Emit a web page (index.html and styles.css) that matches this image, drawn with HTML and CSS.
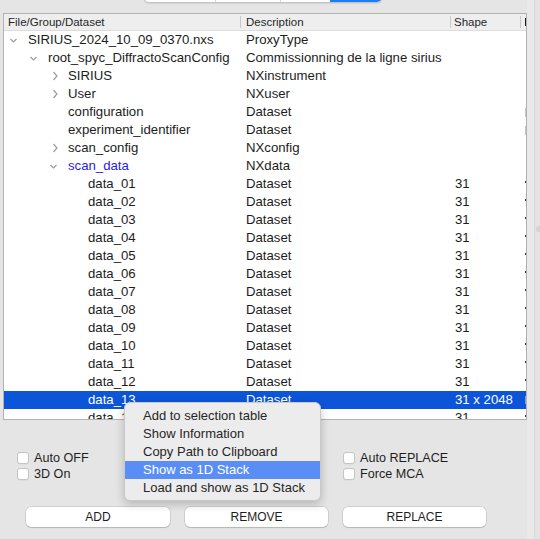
FILE: index.html
```html
<!DOCTYPE html>
<html>
<head>
<meta charset="utf-8">
<link rel="stylesheet" href="styles.css">
</head>
<body>
<div class="window">
  <div class="main">
    <div class="topbar">
      <div class="seg"><span class="s s1"></span><span class="s s2"></span><span class="s s3"></span><span class="s s4 on"></span></div>
    </div>
    <div class="tree">
      <div class="row hdr"><div class="c1">File/Group/Dataset</div><div class="c2">Description</div><div class="c3">Shape</div><div class="c4"><span class="hbar"></span></div></div>
      <div class="body">
        <div class="row"><div class="c1 lv0"><span class="chev"><svg width="10" height="10"><path d="M1.5 4 L4.5 7 L7.5 4"/></svg></span>SIRIUS_2024_10_09_0370.nxs</div><div class="c2">ProxyType</div><div class="c3"></div><div class="c4"></div></div>
        <div class="row"><div class="c1 lv1"><span class="chev"><svg width="10" height="10"><path d="M1.5 4 L4.5 7 L7.5 4"/></svg></span>root_spyc_DiffractoScanConfig</div><div class="c2">Commissionning de la ligne sirius</div><div class="c3"></div><div class="c4"></div></div>
        <div class="row"><div class="c1 lv2"><span class="chev"><svg width="10" height="10"><path d="M4.5 1 L8 5 L4.5 9"/></svg></span>SIRIUS</div><div class="c2">NXinstrument</div><div class="c3"></div><div class="c4"></div></div>
        <div class="row"><div class="c1 lv2"><span class="chev"><svg width="10" height="10"><path d="M4.5 1 L8 5 L4.5 9"/></svg></span>User</div><div class="c2">NXuser</div><div class="c3"></div><div class="c4"></div></div>
        <div class="row"><div class="c1 lv2"><span class="chev"></span>configuration</div><div class="c2">Dataset</div><div class="c3"></div><div class="c4"><span class="gbar"></span></div></div>
        <div class="row"><div class="c1 lv2"><span class="chev"></span>experiment_identifier</div><div class="c2">Dataset</div><div class="c3"></div><div class="c4"><span class="gbar"></span></div></div>
        <div class="row"><div class="c1 lv2"><span class="chev"><svg width="10" height="10"><path d="M4.5 1 L8 5 L4.5 9"/></svg></span>scan_config</div><div class="c2">NXconfig</div><div class="c3"></div><div class="c4"></div></div>
        <div class="row"><div class="c1 lv2 link"><span class="chev"><svg width="10" height="10"><path d="M1.5 4 L4.5 7 L7.5 4"/></svg></span>scan_data</div><div class="c2">NXdata</div><div class="c3"></div><div class="c4"></div></div>
        <div class="row"><div class="c1 lv3"><span class="chev"></span>data_01</div><div class="c2">Dataset</div><div class="c3">31</div><div class="c4"><span class="dot"></span></div></div>
        <div class="row"><div class="c1 lv3"><span class="chev"></span>data_02</div><div class="c2">Dataset</div><div class="c3">31</div><div class="c4"><span class="dot"></span></div></div>
        <div class="row"><div class="c1 lv3"><span class="chev"></span>data_03</div><div class="c2">Dataset</div><div class="c3">31</div><div class="c4"><span class="dot"></span></div></div>
        <div class="row"><div class="c1 lv3"><span class="chev"></span>data_04</div><div class="c2">Dataset</div><div class="c3">31</div><div class="c4"><span class="dot"></span></div></div>
        <div class="row"><div class="c1 lv3"><span class="chev"></span>data_05</div><div class="c2">Dataset</div><div class="c3">31</div><div class="c4"><span class="dot"></span></div></div>
        <div class="row"><div class="c1 lv3"><span class="chev"></span>data_06</div><div class="c2">Dataset</div><div class="c3">31</div><div class="c4"><span class="dot"></span></div></div>
        <div class="row"><div class="c1 lv3"><span class="chev"></span>data_07</div><div class="c2">Dataset</div><div class="c3">31</div><div class="c4"><span class="dot"></span></div></div>
        <div class="row"><div class="c1 lv3"><span class="chev"></span>data_08</div><div class="c2">Dataset</div><div class="c3">31</div><div class="c4"><span class="dot"></span></div></div>
        <div class="row"><div class="c1 lv3"><span class="chev"></span>data_09</div><div class="c2">Dataset</div><div class="c3">31</div><div class="c4"><span class="dot"></span></div></div>
        <div class="row"><div class="c1 lv3"><span class="chev"></span>data_10</div><div class="c2">Dataset</div><div class="c3">31</div><div class="c4"><span class="dot"></span></div></div>
        <div class="row"><div class="c1 lv3"><span class="chev"></span>data_11</div><div class="c2">Dataset</div><div class="c3">31</div><div class="c4"><span class="dot"></span></div></div>
        <div class="row"><div class="c1 lv3"><span class="chev"></span>data_12</div><div class="c2">Dataset</div><div class="c3">31</div><div class="c4"><span class="dot"></span></div></div>
        <div class="row sel"><div class="c1 lv3"><span class="chev"></span>data_13</div><div class="c2">Dataset</div><div class="c3">31 x 2048</div><div class="c4"><span class="sbar"></span></div></div>
        <div class="row"><div class="c1 lv3"><span class="chev"></span>data_14</div><div class="c2">Dataset</div><div class="c3">31</div><div class="c4"><span class="dot"></span></div></div>
      </div>
    </div>
    <div class="opts">
      <label class="chk"><span class="box"></span>Auto OFF</label>
      <label class="chk"><span class="box"></span>Auto REPLACE</label>
      <label class="chk"><span class="box"></span>3D On</label>
      <label class="chk"><span class="box"></span>Force MCA</label>
    </div>
    <div class="btns">
      <div class="btn b1">ADD</div>
      <div class="btn b2">REMOVE</div>
      <div class="btn b3">REPLACE</div>
    </div>
  </div>
  <div class="side">
    <div class="gap"></div>
    <div class="split"><span class="knob"></span></div>
  </div>
  <div class="menu">
    <div class="item">Add to selection table</div>
    <div class="item">Show Information</div>
    <div class="item">Copy Path to Clipboard</div>
    <div class="item hl">Show as 1D Stack</div>
    <div class="item">Load and show as 1D Stack</div>
  </div>
</div>
</body>
</html>
```

FILE: styles.css
```css
html, body {
  margin: 0;
  padding: 0;
}
body {
  background: #e5e5e5;
  font-family: "Liberation Sans", Arial, sans-serif;
  color: #1c1c1c;
  width: 540px;
  height: 539px;
  overflow: hidden;
}
.window {
  position: relative;
  display: flex;
  width: 540px;
  height: 539px;
}
.main {
  flex: none;
  width: 524px;
  padding-left: 3px;
}
.topbar {
  display: flex;
  height: 13px;
}
.seg {
  display: flex;
  margin-left: 140px;
  margin-top: -19px;
  width: 240px;
  height: 22px;
  box-sizing: border-box;
  border: 1px solid #c4c4c4;
  border-radius: 6px;
  background: #fff;
  overflow: hidden;
  box-shadow: 0 1px 1px rgba(0,0,0,0.08);
}
.s { height: 100%; box-sizing: border-box; }
.s1 { width: 71px; }
.s2 { width: 65px; border-left: 1px solid #d6d6d6; }
.s3 { width: 50px; border-left: 1px solid #d6d6d6; }
.s4 { flex: 1; }
.on { background: #1b7df5; }

.tree {
  width: 524px;
  box-sizing: border-box;
  border: 1px solid #b2b2b2;
  background: #fff;
}
.row {
  display: grid;
  grid-template-columns: 236px 210px 70px 6px;
  height: 18px;
  line-height: 18px;
  font-size: 13.2px;
  white-space: nowrap;
}
.row > div {
  overflow: hidden;
}
.hdr {
  height: 16px;
  line-height: 16px;
  font-size: 11.5px;
  color: #262626;
  background: #eeeeee;
  border-bottom: 1px solid #dcdcdc;
}
.hdr .c2, .hdr .c3, .hdr .c4 {
  background-image: linear-gradient(#c8c8c8, #c8c8c8);
  background-size: 1px 12px;
  background-repeat: no-repeat;
  background-position: 0 50%;
}
.c1 { padding-left: 4px; display: flex; align-items: center; }
.c2 { padding-left: 6px; }
.c3 { padding-left: 5px; }
.c4 { padding-left: 5px; }
.hdr .c3 { padding-left: 4px; }
.body {
  height: 388px;
  overflow: hidden;
}
.lv0 { padding-left: 4px; }
.lv1 { padding-left: 24px; }
.lv2 { padding-left: 44px; }
.lv3 { padding-left: 64px; }
.chev {
  flex: none;
  width: 19px;
  height: 18px;
  padding-left: 1px;
  display: flex;
  align-items: center;
}
.chev svg {
  display: block;
  fill: none;
  stroke: #9c9c9c;
  stroke-width: 1.2;
}
.link { color: #1f22f0; }
.hbar {
  display: block;
  width: 1.5px;
  height: 8px;
  margin-top: 4px;
  background: #1a1a1a;
}
.gbar {
  display: block;
  width: 1px;
  height: 9px;
  margin-top: 5px;
  background: #c4c4c4;
}
.dot {
  display: block;
  width: 1px;
  height: 1.5px;
  margin-top: 6px;
  background: #333;
}
.sbar {
  display: block;
  width: 1px;
  height: 8px;
  margin-top: 5px;
  background: #7f9fe0;
}
.sel {
  background: #0d55d8;
  color: #fff;
}

.opts {
  margin-top: 30px;
  padding-left: 14px;
  display: grid;
  grid-template-columns: 326px auto;
  grid-auto-rows: 16px;
  font-size: 12.6px;
  color: #1e1e1e;
}
.chk {
  display: flex;
  align-items: center;
  gap: 5px;
}
.box {
  width: 12px;
  height: 12px;
  box-sizing: border-box;
  border: 1px solid #c4c4c4;
  border-radius: 3px;
  background: #fff;
  box-shadow: 0 0.5px 0.5px rgba(0,0,0,0.06);
}
.btns {
  margin-top: 25px;
  padding-left: 23px;
  display: flex;
  gap: 15px;
}
.btn {
  height: 20px;
  line-height: 20px;
  text-align: center;
  font-size: 12px;
  color: #1e1e1e;
  background: #fff;
  border-radius: 5px;
  box-shadow: 0 0 0 0.5px rgba(0,0,0,0.18), 0 1px 1px rgba(0,0,0,0.12);
}
.b1 { width: 144px; }
.b2 { width: 143px; }
.b3 { width: 143px; }

.side {
  flex: 1;
  display: flex;
}
.side .gap {
  width: 7px;
  background: #e9e9e9;
}
.side .split {
  flex: 1;
  border-left: 1px solid #dadada;
  background: #e3e3e3;
  display: flex;
  flex-direction: column;
}
.knob {
  display: block;
  width: 6px;
  height: 6px;
  margin-top: 226px;
  margin-left: 1px;
  border-radius: 50%;
  background: #d3d3d3;
}

.menu {
  position: absolute;
  left: 124px;
  top: 402px;
  width: 197px;
  height: 99px;
  box-sizing: border-box;
  padding: 4px 0 4px;
  background: #ececec;
  border: 1px solid #c9c9c9;
  border-radius: 6px;
  box-shadow: 0 3px 10px rgba(0,0,0,0.22);
  font-size: 13px;
  color: #262626;
}
.item {
  height: 18px;
  line-height: 18px;
  padding-left: 18px;
  white-space: nowrap;
}
.hl {
  background: #5a8ef5;
  color: #fff;
}
```
